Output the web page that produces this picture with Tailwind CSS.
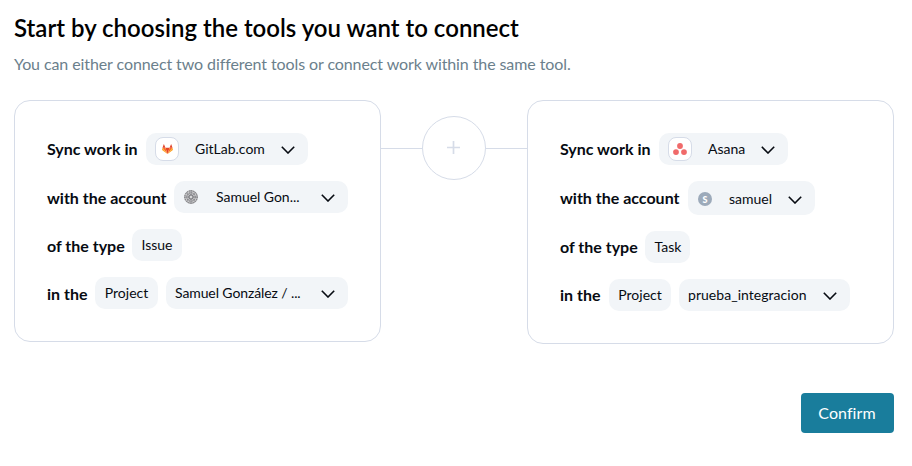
<!DOCTYPE html>
<html lang="en">
<head>
<meta charset="utf-8">
<title>Connect tools</title>
<script src="https://cdn.jsdelivr.net/npm/@tailwindcss/browser@4"></script>
</head>
<body class="bg-white font-['Lato',sans-serif] text-[#070b12]">
<svg class="hidden"><symbol id="chev" viewBox="0 0 14 8"><path d="M.8.8 7 7 13.2.8" fill="none" stroke="currentColor" stroke-width="1.600"/></symbol></svg>
<main class="flex h-[466px] w-[912px] flex-col pl-3.5 pr-[18px] pt-[13px]">
  <h1 class="h-[30px] whitespace-nowrap text-2xl leading-[30px] font-semibold text-black">Start by choosing the tools you want to connect</h1>
  <p class="mt-[9px] h-6 whitespace-nowrap text-base leading-6 tracking-[-0.094px] text-[#6b808c]">You can either connect two different tools or connect work within the same tool.</p>

  <div class="mt-6 flex items-start">
    <section class="flex h-[242px] w-[367px] flex-col gap-4 rounded-[16px] border border-[#d6dce8] p-8 text-sm">
      <div class="flex h-8 items-center">
        <span class="w-[99px] whitespace-nowrap text-base font-bold">Sync work in</span>
        <button class="flex h-8 w-[162px] items-center rounded-[10px] bg-[#f2f5f8] pl-[9px] pr-[13px]">
          <span class="flex size-6 items-center justify-center rounded-lg border border-[#d6dce8] bg-white">
            <svg class="h-2.5 w-[11px]" viewBox="0 0 24 22"><path d="M12 22 7.5 8h9z" fill="#e24329"/><path d="M12 22 7.5 8H1zM12 22l4.500-14H23z" fill="#fc6d26"/><path d="M12 22 1 8 0 13zM12 22 23 8l1 5z" fill="#fca326"/><path d="M1 8 4 0l3.500 8zM23 8l-3-8-3.500 8z" fill="#e24329"/></svg>
          </span>
          <span class="ml-4">GitLab.com</span>
          <svg class="ml-auto mt-px h-2 w-3.5"><use href="#chev"/></svg>
        </button>
      </div>
      <div class="flex h-8 items-center">
        <span class="mt-0.5 w-[127px] whitespace-nowrap text-base font-bold">with the account</span>
        <button class="flex h-8 w-[174px] items-center rounded-[10px] bg-[#f2f5f8] pl-[10px] pr-[13px]">
          <svg class="size-3.5" viewBox="0 0 14 14" fill="none"><circle cx="7" cy="7" r="7" fill="#c9c9cb"/><g stroke="#68686b"><circle cx="7" cy="7" r="6.200" stroke-dasharray="1.400 .8"/><circle cx="7" cy="7" r="4.200" stroke-dasharray="1.200 .7"/><circle cx="7" cy="7" r="2.200"/></g><path d="M7 0v14M0 7h14M2 2l10 10M12 2 2 12" stroke="#85858a" stroke-width=".6"/><circle cx="7" cy="7" r="1" fill="#eee"/></svg>
          <span class="ml-[18px] tracking-[-0.03px]">Samuel Gon...</span>
          <svg class="ml-auto mt-px h-2 w-3.5"><use href="#chev"/></svg>
        </button>
      </div>
      <div class="flex h-8 items-center">
        <span class="mt-0.5 w-[85px] whitespace-nowrap text-base font-bold">of the type</span>
        <span class="flex h-8 w-[50px] items-center justify-center rounded-[10px] bg-[#f2f5f8]">Issue</span>
      </div>
      <div class="flex h-8 items-center">
        <span class="mt-0.5 w-12 whitespace-nowrap text-base font-bold">in the</span>
        <span class="flex h-8 w-[63px] items-center justify-center rounded-[10px] bg-[#f2f5f8]">Project</span>
        <button class="ml-2 flex h-8 w-[182px] items-center rounded-[10px] bg-[#f2f5f8] pl-[9px] pr-[13px]">
          <span class="tracking-[-0.1px]">Samuel González / ...</span>
          <svg class="ml-auto mt-px h-2 w-3.5"><use href="#chev"/></svg>
        </button>
      </div>
    </section>

    <div class="mt-4 flex h-16 w-[146px] items-center">
      <span class="h-px flex-1 bg-[#d6dce8]"></span>
      <span class="flex size-16 items-center justify-center rounded-full border border-[#d6dce8] pr-px pb-px">
        <svg class="size-[13px]" viewBox="0 0 13 13"><path d="M6.500 0v13M0 6.500h13" stroke="#d6dce8" stroke-width="1.700"/></svg>
      </span>
      <span class="h-px flex-1 bg-[#d6dce8]"></span>
    </div>

    <section class="flex h-[244px] w-[367px] flex-col gap-4 rounded-[16px] border border-[#d6dce8] p-8 text-sm">
      <div class="flex h-8 items-center">
        <span class="w-[99px] whitespace-nowrap text-base font-bold">Sync work in</span>
        <button class="flex h-8 w-[129px] items-center rounded-[10px] bg-[#f2f5f8] pl-[9px] pr-[13px]">
          <span class="flex size-6 items-center justify-center rounded-lg border border-[#d6dce8] bg-white">
            <svg class="h-3 w-3.5" viewBox="0 0 14 12" fill="#f06a6a"><circle cx="7" cy="3" r="2.900"/><circle cx="3" cy="9.100" r="2.900"/><circle cx="11" cy="9.100" r="2.900"/></svg>
          </span>
          <span class="ml-4">Asana</span>
          <svg class="ml-auto mt-px h-2 w-3.5"><use href="#chev"/></svg>
        </button>
      </div>
      <div class="flex h-[34px] items-center">
        <span class="w-32 whitespace-nowrap text-base font-bold">with the account</span>
        <button class="flex h-[34px] w-[127px] items-center rounded-[10px] bg-[#f2f5f8] pl-[10px] pr-[13px]">
          <span class="mt-0.5 flex size-3.5 items-center justify-center rounded-full bg-[#9caaba] text-[9px] leading-none font-black text-white">S</span>
          <span class="ml-[17px] mt-0.5">samuel</span>
          <svg class="ml-auto mt-[3px] h-2 w-3.5"><use href="#chev"/></svg>
        </button>
      </div>
      <div class="flex h-8 items-center">
        <span class="w-[85px] whitespace-nowrap text-base font-bold">of the type</span>
        <span class="flex h-8 w-[45px] items-center justify-center rounded-[10px] bg-[#f2f5f8] pl-px">Task</span>
      </div>
      <div class="flex h-8 items-center">
        <span class="w-[49px] whitespace-nowrap text-base font-bold">in the</span>
        <span class="flex h-8 w-[62px] items-center justify-center rounded-[10px] bg-[#f2f5f8]">Project</span>
        <button class="ml-2 flex h-8 w-[171px] items-center rounded-[10px] bg-[#f2f5f8] pl-[9px] pr-[13px]">
          <span class="tracking-[0.04px]">prueba_integracion</span>
          <svg class="ml-auto mt-px h-2 w-3.5"><use href="#chev"/></svg>
        </button>
      </div>
    </section>
  </div>

  <button class="mt-[49px] h-10 w-[93px] self-end rounded bg-[#197d9c] pr-px text-base tracking-[0.06px] text-white">Confirm</button>
</main>
</body>
</html>
